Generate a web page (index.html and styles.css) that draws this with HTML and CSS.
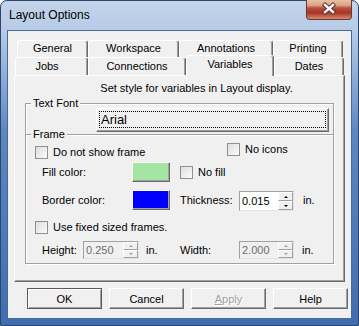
FILE: index.html
```html
<!DOCTYPE html>
<html lang="en">
<head>
  <meta charset="UTF-8">
  <title>Layout Options</title>
  <link rel="stylesheet" href="styles.css">
</head>
<body>
  <div class="window">
    <div class="titlebar">
      <span class="title">Layout Options</span>
      <div class="close-btn">
        <svg width="44" height="18" viewBox="0 0 44 18">
          <path d="M18 5 L26 12 M26 5 L18 12" stroke="#5a3030" stroke-width="4.4" stroke-linecap="square"/>
          <path d="M18 5 L26 12 M26 5 L18 12" stroke="#fff" stroke-width="2.4" stroke-linecap="square"/>
        </svg>
      </div>
    </div>
    <div class="client">
      <div class="tabs">
        <div class="tab-row back">
          <div class="tab t-general">General</div>
          <div class="tab t-workspace">Workspace</div>
          <div class="tab t-annotations">Annotations</div>
          <div class="tab t-printing">Printing</div>
        </div>
        <div class="tab-row front">
          <div class="tab t-jobs">Jobs</div>
          <div class="tab t-connections">Connections</div>
          <div class="tab t-variables selected">Variables</div>
          <div class="tab t-dates">Dates</div>
        </div>
        <div class="panel">
          <p class="caption">Set style for variables in Layout display.</p>
          <div class="group font-group">
            <span class="group-title">Text Font</span>
            <div class="font-btn"><span class="focus">Arial</span></div>
          </div>
          <div class="group frame-group">
            <span class="group-title">Frame</span>
            <div class="row row1">
              <label class="check first"><span class="cb"></span>Do not show frame</label>
              <label class="check icons"><span class="cb"></span>No icons</label>
            </div>
            <div class="row row2">
              <span class="lbl lbl-color">Fill color:</span>
              <span class="swatch green"></span>
              <label class="check nofill"><span class="cb"></span>No fill</label>
            </div>
            <div class="row row3">
              <span class="lbl lbl-color">Border color:</span>
              <span class="swatch blue"></span>
              <span class="lbl lbl-right">Thickness:</span>
              <div class="spin thick">
                <span class="val">0.015</span>
                <span class="arrows"><span class="up"></span><span class="down"></span></span>
              </div>
              <span class="unit">in.</span>
            </div>
            <div class="row row4">
              <label class="check first"><span class="cb"></span>Use fixed sized frames.</label>
            </div>
            <div class="row row5">
              <span class="lbl lbl-height">Height:</span>
              <div class="spin disabled small">
                <span class="val">0.250</span>
                <span class="arrows"><span class="up"></span><span class="down"></span></span>
              </div>
              <span class="unit unit-h">in.</span>
              <span class="lbl lbl-right">Width:</span>
              <div class="spin disabled">
                <span class="val">2.000</span>
                <span class="arrows"><span class="up"></span><span class="down"></span></span>
              </div>
              <span class="unit unit-w">in.</span>
            </div>
          </div>
        </div>
      </div>
      <div class="buttons">
        <button class="btn default">OK</button>
        <button class="btn">Cancel</button>
        <button class="btn disabled"><u>A</u>pply</button>
        <button class="btn">Help</button>
      </div>
    </div>
  </div>
</body>
</html>
```

FILE: styles.css
```css
body {
  margin: 0;
  font: 11px "Liberation Sans", Arial, sans-serif;
  color: #000;
  background: #fff;
}
.window {
  width: 359px;
  height: 326px;
  box-sizing: border-box;
  border: 1px solid #2d4668;
  border-radius: 7px 7px 0 0;
  padding: 0 6px 6px 6px;
  background: linear-gradient(to bottom, #c3d4ea 0px, #b6cbe7 30px, #8eaed9 75px, #5d87c2 130px, #3f6db0 326px);
  display: flex;
  flex-direction: column;
}
.titlebar {
  height: 29px;
  display: flex;
  align-items: flex-start;
}
.title {
  font-size: 12px;
  line-height: 14px;
  padding: 7px 0 0 2px;
}
.close-btn {
  margin: -1px 0 0 auto;
  width: 46px;
  height: 20px;
  box-sizing: border-box;
  border: 1px solid #6a3a32;
  border-top: none;
  border-radius: 0 0 4px 4px;
  background: linear-gradient(to bottom, #e8bfa4 0%, #dca485 28%, #bb4d3e 42%, #a8342b 68%, #c76a52 88%, #d88a70 100%);
  display: flex;
  justify-content: center;
}
.client {
  flex: 1;
  border: 1px solid #4a6a96;
  background: #f0f0f0;
}

/* tabs */
.tabs {
  margin: 9px 0 0 6px;
  width: 331px;
}
.tab-row {
  display: flex;
}
.tab-row.back {
  height: 17px;
  padding-left: 3px;
}
.tab-row.front {
  height: 18px;
  padding-left: 1px;
}
.tab {
  box-sizing: border-box;
  border: 1px solid;
  border-color: #fff #696969 transparent #fff;
  border-bottom: none;
  border-radius: 3px 3px 0 0;
  box-shadow: inset -1px 0 #a0a0a0;
  background: #f0f0f0;
  text-align: center;
  line-height: 13px;
  padding-top: 1px;
}
.front .tab {
  padding-top: 2px;
}
.t-general { width: 71px; }
.t-workspace { width: 91px; }
.t-annotations { width: 94px; }
.t-printing { width: 70px; }
.t-jobs { width: 73px; padding-right: 9px; }
.t-connections { width: 98px; }
.t-variables { width: 88px; }
.t-dates { width: 70px; }
.tab.selected {
  position: relative;
  z-index: 1;
  margin-top: -2px;
  height: 21px;
}
.panel {
  position: relative;
  height: 207px;
  box-sizing: border-box;
  border: 1px solid;
  border-color: #fff #696969 #696969 #fff;
  box-shadow: inset -1px -1px #a0a0a0;
}
.caption {
  margin: 6px 0 0 0;
  line-height: 13px;
  text-align: center;
  padding-left: 34px;
}

/* group boxes */
.group {
  position: relative;
  margin: 0 10px;
  border: 1px solid #a0a0a0;
  box-shadow: inset 1px 1px #fff, 1px 1px #fff;
}
.group-title {
  position: absolute;
  top: -7px;
  left: 5px;
  padding: 0 2px;
  line-height: 13px;
  background: #f0f0f0;
}
.font-group {
  margin-top: 8px;
  height: 31px;
  box-sizing: border-box;
  border-bottom: none;
  padding: 4px 4px 0 70px;
}
.font-btn {
  height: 24px;
  box-sizing: border-box;
  border: 1px solid;
  border-color: #fff #696969 #696969 #fff;
  box-shadow: inset -1px -1px #a0a0a0;
  padding: 2px 2px 3px 2px;
}
.focus {
  display: block;
  height: 100%;
  box-sizing: border-box;
  border: 1px dotted #000;
  font-size: 13px;
  line-height: 15px;
  padding-left: 1px;
}
.frame-group {
  height: 130px;
  box-sizing: border-box;
}

/* rows inside Frame */
.row {
  display: flex;
  align-items: center;
}
.row1 {
  height: 24px;
  align-items: flex-start;
}
.row2 {
  height: 20px;
  margin-top: 3px;
}
.row3 {
  height: 20px;
  margin-top: 8px;
}
.row4 {
  height: 13px;
  margin-top: 11px;
}
.row5 {
  height: 18px;
  margin-top: 7px;
}
.check {
  display: flex;
  align-items: center;
  gap: 5px;
  line-height: 13px;
}
.check.first {
  margin-left: 9px;
  width: 192px;
}
.row1 .check.first {
  margin-top: 11px;
}
.check.icons {
  margin-top: 8px;
}
.check.nofill {
  margin-left: 10px;
}
.cb {
  width: 13px;
  height: 13px;
  box-sizing: border-box;
  border: 1px solid #8e8f8f;
  background: linear-gradient(135deg, #dedede, #fbfbfb);
}
.lbl-color {
  width: 90px;
  padding-left: 16px;
}
.lbl-right {
  width: 59px;
}
.row3 .lbl-right {
  margin-left: 10px;
}
.lbl-height {
  width: 41px;
  padding-left: 16px;
}
.swatch {
  width: 38px;
  height: 20px;
  box-sizing: border-box;
  border: 1px solid;
  border-color: #fff #696969 #696969 #fff;
  box-shadow: inset -1px -1px #a0a0a0;
}
.swatch.green { background: #a3e4a3; }
.swatch.blue { background: #0000ff; }

/* spin boxes */
.spin {
  display: flex;
  width: 55px;
  height: 18px;
  box-sizing: border-box;
  border: 1px solid;
  border-color: #a0a0a0 #e3e3e3 #e3e3e3 #a0a0a0;
  background: #fff;
}
.spin.thick {
  height: 20px;
  margin-top: 2px;
}
.spin.small {
  width: 56px;
}
.spin.disabled {
  background: #f0f0f0;
  color: #6d6d6d;
}
.val {
  flex: 1;
  padding-left: 2px;
  align-self: center;
  line-height: 13px;
}
.arrows {
  width: 15px;
  display: flex;
  flex-direction: column;
}
.up, .down {
  flex: 1;
  border: 1px solid;
  border-color: #fff #a0a0a0 #a0a0a0 #fff;
  background: #f0f0f0;
  display: flex;
  align-items: center;
  justify-content: center;
}
.up::after, .down::after {
  content: "";
  border-left: 2px solid transparent;
  border-right: 2px solid transparent;
}
.up::after { border-bottom: 2px solid #000; }
.down::after { border-top: 2px solid #000; }
.disabled .up::after { border-bottom-color: #a0a0a0; }
.disabled .down::after { border-top-color: #a0a0a0; }
.unit {
  margin-left: 9px;
}
.unit-h {
  margin-left: 7px;
  width: 34px;
}
.unit-w {
  margin-left: 8px;
}

/* dialog buttons */
.buttons {
  display: flex;
  gap: 7px;
  margin: 6px 0 0 19px;
}
.btn {
  width: 75px;
  height: 21px;
  box-sizing: border-box;
  border: 1px solid;
  border-color: #fff #696969 #696969 #fff;
  box-shadow: inset -1px -1px #a0a0a0;
  background: #f0f0f0;
  font: inherit;
  color: #000;
  padding: 0;
}
.btn.default {
  border-color: #5a5a5a;
  box-shadow: inset 1px 1px #fff, inset -1px -1px #a0a0a0;
}
.btn.disabled {
  color: #a0a0a0;
  text-shadow: 1px 1px #fff;
}
```
